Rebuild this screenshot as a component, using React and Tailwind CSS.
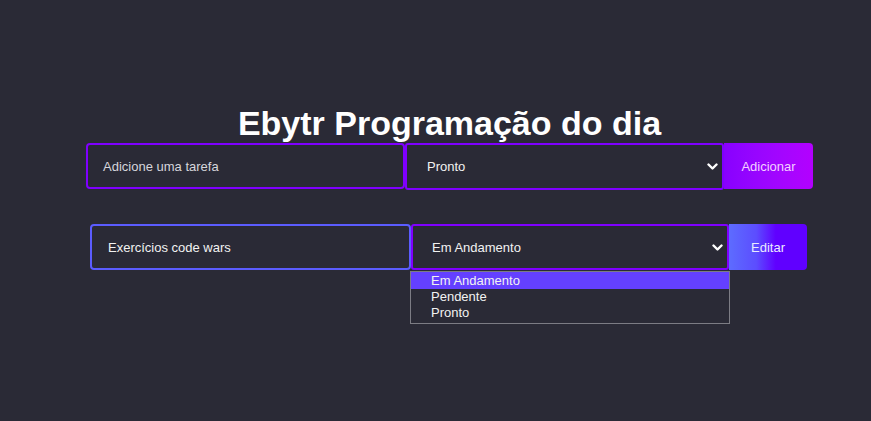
import { useState } from 'react';

const font = { fontFamily: '"Liberation Sans", Arial, sans-serif' };

function Chevron() {
  return (
    <svg width="11" height="8" viewBox="0 0 11 8" className="shrink-0">
      <path d="M1.5 1.5 L5.5 5.5 L9.5 1.5" fill="none" stroke="#ffffff" strokeWidth="2.4" strokeLinecap="round" strokeLinejoin="round" />
    </svg>
  );
}

function FakeSelect({ value, className, textPad }) {
  return (
    <div className={`flex items-center justify-between border-2 border-[#7f00ff] rounded-[3px] bg-[#2a2a36] pr-[4px] pt-[1px] ${className}`}>
      <span className={`text-[13px] text-[#f2f2f2] ${textPad}`}>{value}</span>
      <Chevron />
    </div>
  );
}

export default function App() {
  const [options] = useState(['Em Andamento', 'Pendente', 'Pronto']);

  return (
    <div className="w-[871px] h-[421px] bg-[#2a2a36] overflow-hidden" style={font}>
      <div className="flex flex-col items-center pl-[28px] pt-[106px]">
        <h1 className="text-[34px] leading-[34px] font-bold text-white mb-[3px]">Ebytr Programação do dia</h1>

        <div className="flex items-stretch h-[46px]">
          <div className="w-[319px] border-2 border-[#7f00ff] rounded-[4px] flex items-center pl-[15px] pt-[2px]">
            <span className="text-[13px] text-[#d6d6dc]">Adicione uma tarefa</span>
          </div>
          <FakeSelect value="Pronto" className="w-[319px] h-[47px]" textPad="pl-[20px]" />
          <button className="w-[89px] rounded-r-[4px] bg-gradient-to-r from-[#8800ff] to-[#b300ff] text-[13px] text-[#f3d0ff] pt-[1px]">
            Adicionar
          </button>
        </div>

        <div className="flex items-stretch h-[46px] mt-[35px] -ml-[2px]">
          <div className="w-[321px] border-2 border-[#5b5cff] rounded-[4px] flex items-center pl-[16px] pt-[2px]">
            <span className="text-[13px] text-[#f2f2f2]">Exercícios code wars</span>
          </div>
          <div className="relative">
            <FakeSelect value="Em Andamento" className="w-[318px] h-[46px]" textPad="pl-[19px]" />
            <div className="absolute left-[-1px] top-[47px] w-[320px] border border-[#7c7c84] bg-[#2a2a36] pb-[2px]">
              {options.map((o, i) => (
                <div
                  key={o}
                  className={`h-[16px] leading-[16px] text-[13px] pl-[20px] text-[#f2f2f2] ${i === 0 ? 'bg-[#6440ff] h-[17px] leading-[17px]' : ''}`}
                >
                  {o}
                </div>
              ))}
            </div>
          </div>
          <button className="w-[78px] rounded-r-[4px] bg-[linear-gradient(90deg,#5d6cff_0%,#5c4dff_35%,#6000ff_60%,#6000ff_100%)] text-[13px] text-[#eaeaff] pt-[1px]">
            Editar
          </button>
        </div>
      </div>
    </div>
  );
}
